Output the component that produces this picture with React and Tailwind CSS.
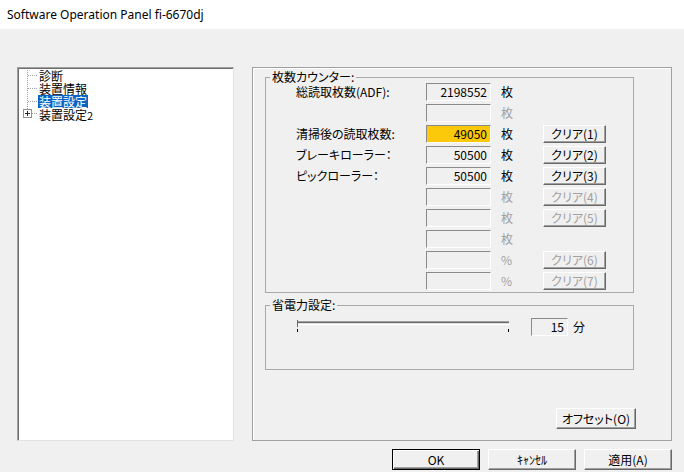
import React from 'react';

// counter rows of the 装置設定 page
const counterRows = [
  { label: '総読取枚数(ADF):', value: '2198552', unit: '枚' },
  { value: '', unit: '枚', disabled: true },
  { label: '清掃後の読取枚数:', value: '49050', unit: '枚', btn: 'クリア(1)', highlight: true },
  { label: 'ブレーキローラー：', value: '50500', unit: '枚', btn: 'クリア(2)' },
  { label: 'ピックローラー：', value: '50500', unit: '枚', btn: 'クリア(3)' },
  { value: '', unit: '枚', btn: 'クリア(4)', disabled: true },
  { value: '', unit: '枚', btn: 'クリア(5)', disabled: true },
  { value: '', unit: '枚', disabled: true },
  { value: '', unit: '%', btn: 'クリア(6)', disabled: true },
  { value: '', unit: '%', btn: 'クリア(7)', disabled: true },
];

const Field = ({ value, highlight, className = 'w-[65px]' }) => (
  <div
    className={`h-[18px] border border-t-[#8a8a8a] border-l-[#8a8a8a] border-r-white border-b-white pr-[3px] text-right leading-[16px] ${
      highlight ? 'bg-[#fcc80a]' : 'bg-[#f0f0f0]'
    } ${className}`}
  >
    {value}
  </div>
);

const ClassicButton = ({ children, disabled, className = '' }) => (
  <button
    type="button"
    className={`flex items-center justify-center bg-[#f0f0f0] border border-t-white border-l-white border-r-[#696969] border-b-[#696969] shadow-[inset_-1px_-1px_0_#a0a0a0] leading-none ${
      disabled ? 'text-[#a0a0a0]' : 'text-black'
    } ${className}`}
  >
    {children}
  </button>
);

const TreeLines = () => (
  <svg width="20" height="52" className="shrink-0">
    <g stroke="#a0a0a0" strokeDasharray="1 1" fill="none">
      <line x1="9.5" y1="1" x2="9.5" y2="40" />
      <line x1="10" y1="6.5" x2="19" y2="6.5" />
      <line x1="10" y1="19.5" x2="19" y2="19.5" />
      <line x1="10" y1="32.5" x2="19" y2="32.5" />
      <line x1="14" y1="44.5" x2="19" y2="44.5" />
    </g>
    <rect x="5.5" y="40.5" width="8" height="8" fill="#fff" stroke="#919191" />
    <line x1="7" y1="44.5" x2="12" y2="44.5" stroke="#222" />
    <line x1="9.5" y1="42" x2="9.5" y2="47" stroke="#222" />
  </svg>
);

const Slider = () => (
  <svg width="216" height="18" viewBox="0 0 216 18" className="shrink-0 block">
    <rect x="1" y="3" width="212" height="1" fill="#a0a0a0" />
    <rect x="2" y="4" width="211" height="1" fill="#696969" />
    <rect x="2" y="5" width="211" height="1" fill="#e3e3e3" />
    <rect x="1" y="6" width="213" height="1" fill="#ffffff" />
    <rect x="1" y="2" width="1" height="7" fill="#696969" />
    <rect x="1" y="11" width="1" height="3" fill="#000000" />
    <rect x="212" y="11" width="1" height="3" fill="#000000" />
  </svg>
);

export default function App() {
  return (
    <div className="w-[684px] h-[472px] bg-[#f0f0f0] text-[12px] text-black font-['Noto_Sans_CJK_JP',sans-serif] [font-feature-settings:'palt'] overflow-hidden">
      {/* title bar */}
      <div className="h-[29px] bg-white flex items-center pl-[7px] font-['Noto_Sans',sans-serif] text-[12px] text-black">
        Software Operation Panel fi-6670dj
      </div>

      <div className="pl-[17px] pt-[38px]">
        <div className="flex gap-[18px]">
          {/* tree */}
          <div className="w-[217px] h-[374px] bg-white border border-t-[#a0a0a0] border-l-[#a0a0a0] border-r-[#e3e3e3] border-b-[#e3e3e3] shadow-[inset_1px_1px_0_#6d6d6d] pt-[1px] flex">
            <TreeLines />
            <div className="flex flex-col text-[12px]">
              <div className="h-[13px] leading-[13px] px-[1px]">診断</div>
              <div className="h-[13px] leading-[13px] px-[1px]">装置情報</div>
              <div className="h-[13px] leading-[13px]">
                <span className="inline-block h-[13px] px-[1px] bg-[#0d63c3] text-white">装置設定</span>
              </div>
              <div className="h-[13px] leading-[13px] px-[1px]">
                装置設定<span className="text-[11px]">2</span>
              </div>
            </div>
          </div>

          {/* settings panel */}
          <div className="w-[420px] h-[374px] border border-[#a0a0a0] shadow-[inset_1px_1px_0_#fff] pt-[3px] pl-[12px]">
            <fieldset className="w-[369px] border border-[#a9a9a9] pb-[2px]">
              <legend className="ml-[4px] px-[2px] leading-[12px]">枚数カウンター:</legend>
              <div className="flex flex-col gap-[3px] pl-[30px]">
                {counterRows.map((row, i) => (
                  <div key={i} className="flex items-center h-[18px]">
                    <div className="w-[130px] whitespace-nowrap">{row.label}</div>
                    <Field value={row.value} highlight={row.highlight} />
                    <div className={`w-[12px] ml-[10px] ${row.disabled ? 'text-[#a0a0a0]' : ''}`}>{row.unit}</div>
                    {row.btn && (
                      <ClassicButton disabled={row.disabled} className="ml-[30px] w-[63px] h-[18px]">
                        {row.btn}
                      </ClassicButton>
                    )}
                  </div>
                ))}
              </div>
            </fieldset>

            <fieldset className="w-[369px] h-[71px] mt-[6px] border border-[#a9a9a9]">
              <legend className="ml-[4px] px-[2px] leading-[12px]">省電力設定:</legend>
              <div className="flex items-start pl-[30px] mt-[7px]">
                <Slider />
                <Field value="15" className="w-[37px] ml-[19px]" />
                <div className="ml-[5px] leading-[18px]">分</div>
              </div>
            </fieldset>

            <div className="flex justify-end pr-[35px] mt-[38px]">
              <ClassicButton className="w-[80px] h-[21px]">オフセット(O)</ClassicButton>
            </div>
          </div>
        </div>

        {/* dialog buttons */}
        <div className="flex justify-end gap-[8px] pr-[12px] mt-[8px]">
          <button
            type="button"
            className="w-[88px] h-[21px] flex items-center justify-center bg-[#f0f0f0] border border-black shadow-[inset_1px_1px_0_#fff,inset_-1px_-1px_0_#696969,inset_-2px_-2px_0_#a0a0a0] leading-none"
          >
            OK
          </button>
          <ClassicButton className="w-[88px] h-[21px]">ｷｬﾝｾﾙ</ClassicButton>
          <ClassicButton className="w-[88px] h-[21px]">適用(A)</ClassicButton>
        </div>
      </div>
    </div>
  );
}
